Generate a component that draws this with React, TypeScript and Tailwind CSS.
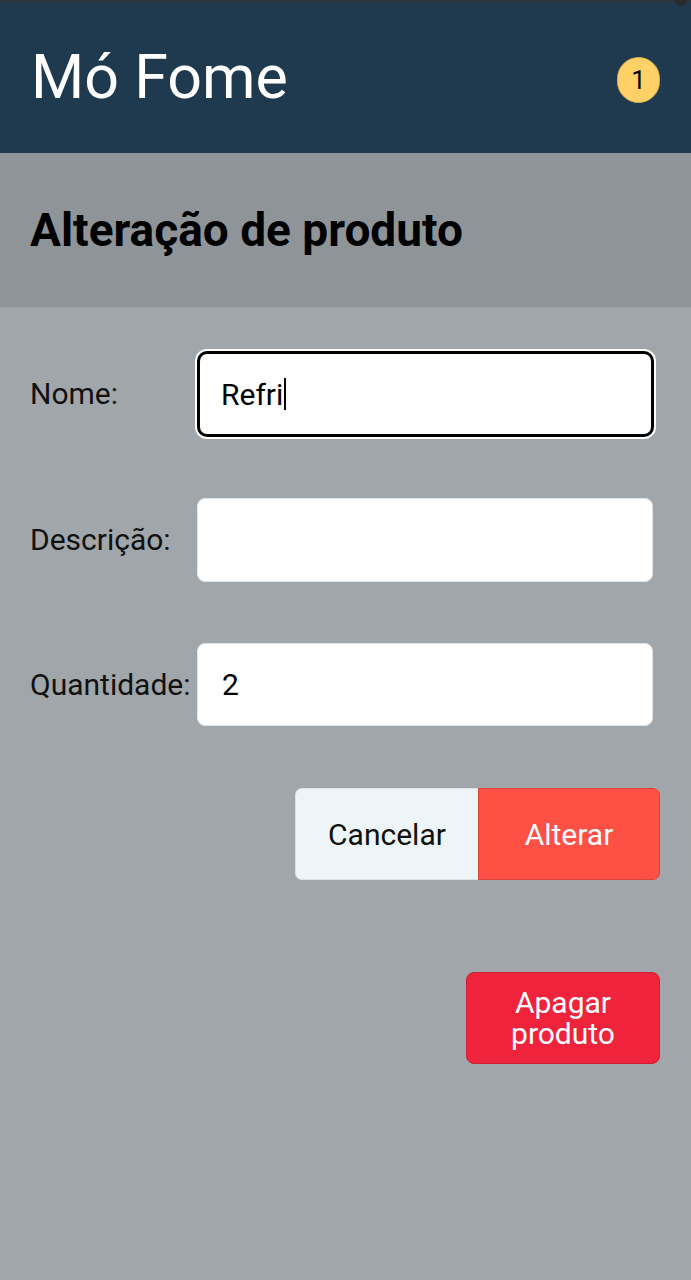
import React from "react";

export default function App() {
  return (
    <div className="relative min-h-[1280px] w-full bg-[#a1a6aa] font-['Roboto',sans-serif]">
      <div className="absolute right-[4px] top-[-6px] h-[12px] w-[12px] rounded-full bg-[#2a2a2a]" />
      <header className="flex h-[153px] items-center justify-between border-t-2 border-[#2f3438] bg-[#1f3a4f] pl-[31px] pr-[31px]">
        <h1 className="text-[61px] font-normal leading-none text-white">Mó Fome</h1>
        <span className="mt-[4px] flex h-[46px] w-[43px] items-center justify-center rounded-full border border-[#d8ad4c] bg-[#ffd166] text-[26px] leading-none text-black">
          1
        </span>
      </header>
      <div className="flex h-[154px] items-center bg-[#8f9499] pl-[30px]">
        <h2 className="text-[46px] font-bold leading-none text-black">Alteração de produto</h2>
      </div>
      <main className="flex flex-col pl-[30px] pr-[31px] pt-[44px]">
        <div className="flex flex-col gap-[61px]">
          <div className="flex items-center">
            <label className="w-[167px] text-[30px] leading-none text-[#111]">Nome:</label>
            <div className="flex h-[86px] w-[457px] items-center rounded-[10px] border-[3px] border-black bg-white pl-[21px] text-[30px] text-black shadow-[0_0_0_2px_#ffffff]">
              <span>Refri</span>
              <span className="ml-[1px] h-[32px] w-[2px] bg-black" />
            </div>
          </div>
          <div className="flex items-center">
            <label className="w-[167px] text-[30px] leading-none text-[#111]">Descrição:</label>
            <input
              className="h-[84px] w-[456px] rounded-[8px] border border-[#dfe4e8] bg-white pl-[24px] text-[30px] text-black outline-none"
              defaultValue=""
            />
          </div>
          <div className="flex items-center">
            <label className="w-[167px] text-[30px] leading-none text-[#111]">Quantidade:</label>
            <input
              className="h-[83px] w-[456px] rounded-[8px] border border-[#dfe4e8] bg-white pl-[24px] text-[30px] text-black outline-none"
              defaultValue="2"
            />
          </div>
        </div>
        <div className="mt-[62px] flex justify-end">
          <button className="h-[92px] w-[183px] rounded-l-[7px] border border-r-0 border-[#dbe3e7] bg-[#eef5f8] text-[30px] text-[#111]">
            Cancelar
          </button>
          <button className="h-[92px] w-[182px] rounded-r-[7px] border border-[#d9443b] bg-[#ff5046] text-[30px] text-white">
            Alterar
          </button>
        </div>
        <div className="mt-[92px] flex justify-end">
          <button className="h-[92px] w-[194px] rounded-[8px] border border-[#cf1f35] bg-[#ef233c] text-[30px] leading-[31px] text-white">
            Apagar
            <br />
            produto
          </button>
        </div>
      </main>
    </div>
  );
}
